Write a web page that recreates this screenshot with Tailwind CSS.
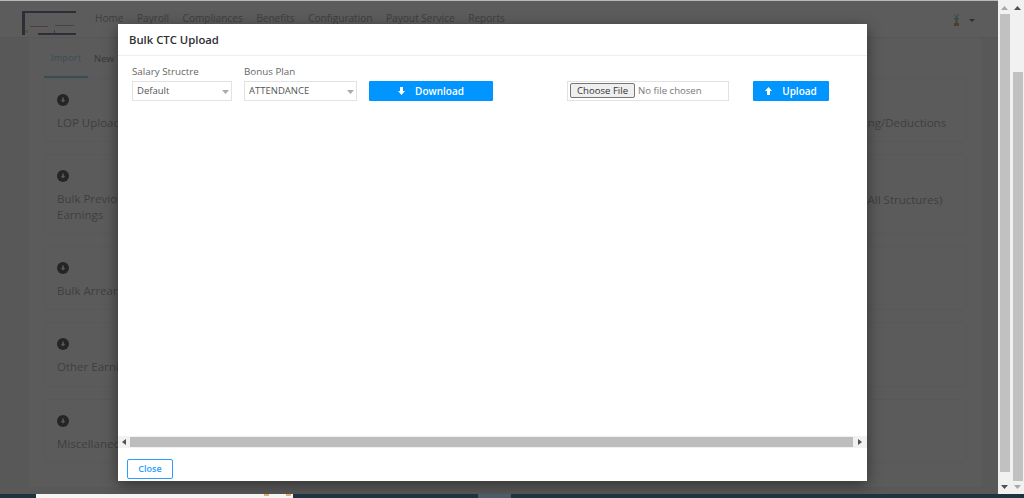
<!DOCTYPE html>
<html lang="en">
<head>
  <meta charset="UTF-8" />
  <meta name="viewport" content="width=device-width, initial-scale=1.0" />
  <title>Bulk CTC Upload</title>
  <script src="https://cdn.jsdelivr.net/npm/@tailwindcss/browser@4"></script>
</head>
<body class="bg-[#1d3440] font-['Open_Sans',sans-serif] overflow-hidden">
  <div class="relative w-[1024px] h-[498px] flex flex-col overflow-hidden">
    <div class="flex h-[494px] shrink-0">

      <!-- page behind the modal -->
      <div class="relative w-[998px] h-full shrink-0 bg-[#dcdcdc] border-t border-t-[#b9b9b9] overflow-hidden">
        <header class="h-[37px] bg-[#e6e5e5] border-b border-[#d6d6d6] flex items-center pl-[22px] pr-[22px]">
          <svg width="56" height="26" viewBox="0 0 56 26" class="shrink-0 mt-[9px]">
            <rect x="1" y="0" width="53" height="2" fill="#6e7684"/>
            <rect x="0" y="0" width="3" height="24" fill="#6e7684"/>
            <rect x="16" y="22" width="38" height="2" fill="#6e7684"/>
            <rect x="8" y="15" width="18" height="1" fill="#c99a94"/>
            <rect x="33" y="14" width="19" height="1" fill="#8fb0d0"/>
            <rect x="32" y="19" width="1" height="3" fill="#c98080"/>
            <rect x="3" y="19" width="3" height="3" fill="#d8cf8c"/>
          </svg>
          <nav class="flex gap-[13.5px] ml-[17px] text-[10.1px] text-[#9d9d9d] mt-[-1px]">
            <span>Home</span><span>Payroll</span><span>Compliances</span><span>Benefits</span><span>Configuration</span><span>Payout Service</span><span>Reports</span>
          </nav>
          <div class="ml-auto flex items-center gap-[9px] pr-[1px] mt-[2px]">
            <svg width="7" height="13" viewBox="0 0 7 13">
              <path d="M1 0l5 5v1L1 1z" fill="#7fd07f"/>
              <path d="M6 0L1 5v1l5-5z" fill="#7aa8e8"/>
              <rect x="2.5" y="4" width="2" height="5" fill="#6fc27a"/>
              <rect x="1" y="9" width="5" height="3" fill="#e08a78"/>
            </svg>
            <svg width="6" height="3" viewBox="0 0 6 3"><path d="M0 0h6L3 3z" fill="#777"/></svg>
          </div>
        </header>

        <main class="ml-[29px] w-[953px] h-[449px] bg-[#e6e4e4] px-[15px]">
          <div class="h-[40px] flex text-[9.5px]">
            <span class="w-[44px] h-[40px] flex items-center justify-center pt-[2px] text-[#8fc0d4] border-b-2 border-[#8fc0d4]">Import</span>
            <span class="ml-[6px] h-[40px] flex items-center pt-[2px] text-[#8a8a8a]">New</span>
          </div>
          <div class="grid grid-cols-4 gap-x-3 gap-y-3 text-[11.5px] leading-[16px] text-[#9c9ca6]">
            <div class="h-[64px] border border-[#dedcdc] rounded px-3 pt-[15px]"><svg width="12" height="12" viewBox="0 0 12 12"><circle cx="6" cy="6" r="6" fill="#605e5e"/><path d="M5.2 3.5h1.6V6h1.5L6 8.6 3.7 6h1.5z" fill="#dcdcdc"/></svg><p class="mt-[9px] whitespace-nowrap">LOP Upload</p></div>
            <div class="border border-[#dedcdc] rounded"></div>
            <div class="border border-[#dedcdc] rounded"></div>
            <div class="border border-[#dedcdc] rounded pl-[26px] pt-[36px]"><p class="whitespace-nowrap">Bulk Upload Earning/Deductions</p></div>

            <div class="h-[80px] border border-[#dedcdc] rounded px-3 pt-[15px]"><svg width="12" height="12" viewBox="0 0 12 12"><circle cx="6" cy="6" r="6" fill="#605e5e"/><path d="M5.2 3.5h1.6V6h1.5L6 8.6 3.7 6h1.5z" fill="#dcdcdc"/></svg><p class="mt-[9px]">Bulk Previous Year<br />Earnings</p></div>
            <div class="border border-[#dedcdc] rounded"></div>
            <div class="border border-[#dedcdc] rounded"></div>
            <div class="border border-[#dedcdc] rounded pl-[26px] pt-[37px]"><p class="whitespace-nowrap">Bulk CTC Upload (All Structures)</p></div>

            <div class="h-[64px] border border-[#dedcdc] rounded px-3 pt-[15px]"><svg width="12" height="12" viewBox="0 0 12 12"><circle cx="6" cy="6" r="6" fill="#605e5e"/><path d="M5.2 3.5h1.6V6h1.5L6 8.6 3.7 6h1.5z" fill="#dcdcdc"/></svg><p class="mt-[9px] whitespace-nowrap">Bulk Arrear</p></div>
            <div class="border border-[#dedcdc] rounded"></div>
            <div class="border border-[#dedcdc] rounded"></div>
            <div class="border border-[#dedcdc] rounded"></div>

            <div class="h-[65px] border border-[#dedcdc] rounded px-3 pt-[15px]"><svg width="12" height="12" viewBox="0 0 12 12"><circle cx="6" cy="6" r="6" fill="#605e5e"/><path d="M5.2 3.5h1.6V6h1.5L6 8.6 3.7 6h1.5z" fill="#dcdcdc"/></svg><p class="mt-[9px] whitespace-nowrap">Other Earnings</p></div>
            <div class="border border-[#dedcdc] rounded"></div>
            <div class="border border-[#dedcdc] rounded"></div>
            <div class="border border-[#dedcdc] rounded"></div>

            <div class="h-[64px] border border-[#dedcdc] rounded px-3 pt-[15px]"><svg width="12" height="12" viewBox="0 0 12 12"><circle cx="6" cy="6" r="6" fill="#605e5e"/><path d="M5.2 3.5h1.6V6h1.5L6 8.6 3.7 6h1.5z" fill="#dcdcdc"/></svg><p class="mt-[9px] whitespace-nowrap">Miscellaneous</p></div>
            <div class="border border-[#dedcdc] rounded"></div>
            <div class="border border-[#dedcdc] rounded"></div>
            <div class="border border-[#dedcdc] rounded"></div>
          </div>
        </main>

        <!-- overlay -->
        <div class="absolute inset-0 bg-black/60"></div>

        <!-- modal -->
        <div class="absolute left-[118px] top-[23px] w-[749px] h-[457px] bg-white flex flex-col shadow-[0_4px_14px_rgba(0,0,0,0.45)]">
          <div class="h-[32px] shrink-0 border-b border-[#eeeeee] flex items-center pt-[1px] px-[11px] text-[11.3px] font-semibold text-[#2e2e33]">Bulk CTC Upload</div>

          <div class="flex-1 pl-[14px] pt-[9px] flex items-start text-[#555]">
            <div class="w-[100px]">
              <label for="salary" class="block h-[14px] leading-[14px] text-[9.8px] text-[#666]">Salary Structre</label>
              <div class="relative mt-[2px]">
                <select id="salary" class="block appearance-none w-full h-[20px] border border-[#e2e2e2] bg-white pl-[4px] text-[9.5px] leading-[18px] text-[#555]"><option>Default</option></select>
                <svg width="7" height="4" viewBox="0 0 7 4" class="absolute right-[3px] top-[9px]"><path d="M0 0h7L3.5 4z" fill="#aaa"/></svg>
              </div>
            </div>
            <div class="w-[113px] ml-[12px]">
              <label for="bonus" class="block h-[14px] leading-[14px] text-[9.8px] text-[#666]">Bonus Plan</label>
              <div class="relative mt-[2px]">
                <select id="bonus" class="block appearance-none w-full h-[20px] border border-[#e2e2e2] bg-white pl-[4px] text-[9.5px] leading-[18px] text-[#555]"><option>ATTENDANCE</option></select>
                <svg width="7" height="4" viewBox="0 0 7 4" class="absolute right-[3px] top-[9px]"><path d="M0 0h7L3.5 4z" fill="#aaa"/></svg>
              </div>
            </div>
            <button class="w-[124px] h-[20px] ml-[12px] mt-[16px] rounded-[1px] bg-[#0095ff] text-white text-[10px] font-semibold flex items-center justify-center gap-[10px]">
              <svg width="7" height="8" viewBox="0 0 7 8"><path d="M2 0h3v4h2L3.5 8 0 4h2z" fill="#fff"/></svg>
              Download
            </button>
            <input type="file" class="w-[162px] h-[20px] ml-[74px] mt-[16px] border border-[#e2e2e2] pl-[2px] pt-[1px] text-[9.6px] text-[#777] file:text-[9.6px] file:text-[#333] file:h-[15px] file:px-[6px] file:mr-[3px] file:bg-[#efefef] file:border file:border-[#767676] file:rounded-[2px]" />
            <button class="w-[76px] h-[20px] ml-[24px] mt-[16px] rounded-[1px] bg-[#0095ff] text-white text-[10px] font-semibold flex items-center justify-center gap-[10px]">
              <svg width="7" height="8" viewBox="0 0 7 8"><path d="M2 8h3V4h2L3.5 0 0 4h2z" fill="#fff"/></svg>
              Upload
            </button>
          </div>

          <!-- horizontal scrollbar of the modal body -->
          <div class="h-[12px] shrink-0 bg-[#f1f1f1] flex items-center">
            <div class="w-[12px] flex justify-center"><svg width="4" height="6" viewBox="0 0 4 6"><path d="M4 0v6L0 3z" fill="#505050"/></svg></div>
            <div class="h-[10px] w-[723px]  bg-[#bdbdbd]"></div>
            <div class="flex-1 flex justify-center"><svg width="4" height="6" viewBox="0 0 4 6"><path d="M0 0v6l4-3z" fill="#505050"/></svg></div>
          </div>

          <div class="h-[33px] shrink-0 pl-[9px] pt-[11px]">
            <button class="block w-[46px] h-[20px] border border-[#2a9dff] rounded-[2px] bg-white text-[#2a9dff] text-[9px] font-semibold">Close</button>
          </div>
        </div>
      </div>

      <!-- inner page scrollbar -->
      <div class="w-[13px] bg-[#f1f1f1] flex flex-col items-center">
        <svg width="7" height="4" viewBox="0 0 7 4" class="mt-[6px]"><path d="M0 4h7L3.5 0z" fill="#a8a8a8"/></svg>
        <div class="w-[10px] h-[458px] mt-[4px] bg-[#c1c1c1]"></div>
        <svg width="7" height="4" viewBox="0 0 7 4" class="mt-[13px]"><path d="M0 0h7L3.5 4z" fill="#505050"/></svg>
      </div>
      <!-- browser scrollbar -->
      <div class="w-[13px] bg-[#f1f1f1] flex flex-col items-center">
        <svg width="7" height="4" viewBox="0 0 7 4" class="mt-[6px]"><path d="M0 4h7L3.5 0z" fill="#505050"/></svg>
        <div class="w-[10px] h-[409px] mt-[62px] bg-[#c1c1c1]"></div>
        <svg width="7" height="4" viewBox="0 0 7 4" class="mt-[4px]"><path d="M0 0h7L3.5 4z" fill="#a8a8a8"/></svg>
      </div>
    </div>

    <!-- taskbar sliver -->
    <div class="h-[4px] flex">
      <div class="w-[36px]"></div>
      <div class="w-[257px] bg-[#f4f4f4] flex justify-end gap-[17px] pr-[2px]">
        <span class="w-[5px] h-[2px] bg-[#e0b070]"></span>
        <span class="w-[5px] h-[2px] bg-[#e0b070]"></span>
      </div>
      <div class="w-[185px]"></div>
      <div class="w-[33px] bg-[#4c5d68]"></div>
    </div>
  </div>
</body>
</html>
